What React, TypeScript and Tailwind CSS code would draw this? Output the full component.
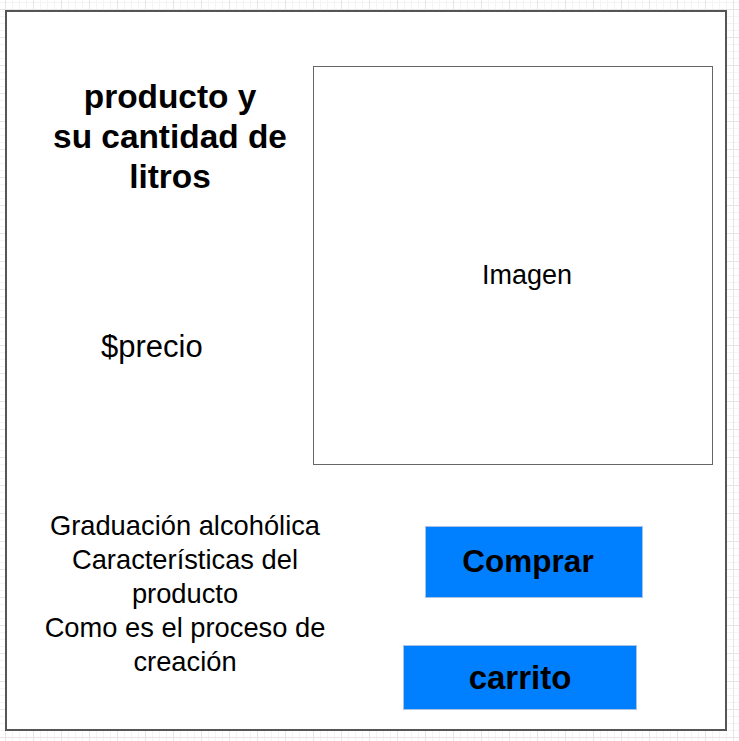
export default function App() {
  return (
    <div className="h-[741px] w-full overflow-hidden bg-white bg-[linear-gradient(to_right,#e6e6e6_1px,transparent_1px),linear-gradient(to_bottom,#e6e6e6_1px,transparent_1px),linear-gradient(to_right,#f4f4f4_1px,transparent_1px),linear-gradient(to_bottom,#f4f4f4_1px,transparent_1px)] bg-[size:28px_28px,28px_28px,7px_7px,7px_7px] bg-[position:5px_9px] pt-[10px] pl-[5px] font-['Liberation_Sans',Arial,sans-serif] text-black">
      <div className="flex h-[721px] w-[722px] flex-col border-2 border-[#555] bg-white">
        {/* top: title, price, image */}
        <div className="flex">
          <div className="flex w-[306px] flex-col items-center pl-[20px] pt-[65px]">
            <h1 className="text-center text-[33.4px] font-bold leading-[40px]">
              producto y
              <br />
              su cantidad de
              <br />
              litros
            </h1>
            <p className="mt-[133px] ml-[74px] self-start text-[31px] leading-[34px]">$precio</p>
          </div>
          <div className="mt-[54px] flex h-[399px] w-[400px] items-center justify-center border border-[#666] pt-[20px] pl-[28px] text-[27px]">
            Imagen
          </div>
        </div>

        {/* bottom: details and buttons */}
        <div className="flex">
          <div className="mt-[44px] w-[358px] pr-[2px] text-center text-[27.3px] leading-[34px]">
            Graduación alcohólica
            <br />
            Características del
            <br />
            producto
            <br />
            Como es el proceso de
            <br />
            creación
          </div>
          <div className="flex flex-col items-start">
            <button className="mt-[61px] ml-[60px] flex h-[72px] w-[218px] items-center justify-center border border-[#a9c2e4] bg-[#007fff] pr-[12px] text-[31.5px] font-bold">
              Comprar
            </button>
            <button className="mt-[47px] ml-[38px] flex h-[65px] w-[234px] items-center justify-center border border-[#a9c2e4] bg-[#007fff] text-[33px] font-bold">
              carrito
            </button>
          </div>
        </div>
      </div>
    </div>
  );
}
